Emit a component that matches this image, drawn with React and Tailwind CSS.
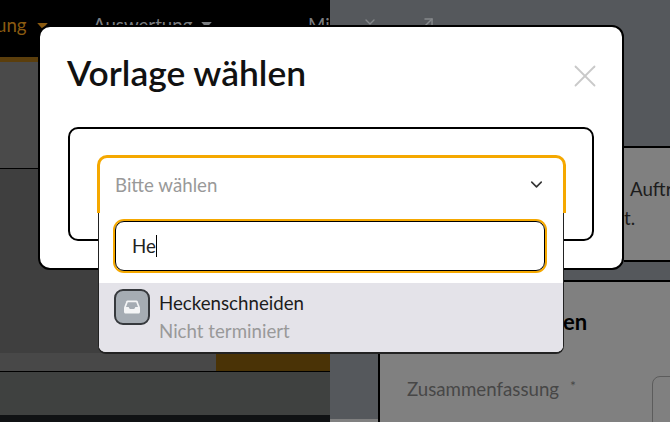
import React from 'react';
import { ChevronDown, X, ArrowUpRight } from 'lucide-react';

const lato = { fontFamily: 'Lato, sans-serif' };

function Caret({ className }) {
  return (
    <svg width="11" height="6" viewBox="0 0 14 8" className={className}>
      <path d="M0 0h14L7 8z" fill="currentColor" />
    </svg>
  );
}

function InboxIcon() {
  return (
    <svg width="16" height="14" viewBox="0 0 16 14" fill="none">
      <path d="M3.500.5h9c.5 0 .9.300 1.100.8L16 7.500v4.500c0 .9-.7 1.500-1.500 1.500h-13C.7 13.500 0 12.900 0 12V7.500l2.400-6.200C2.600.8 3 .5 3.500.5z" fill="#f4f5f6" />
      <path d="M3.800 2.200h8.400l1.800 4.800h-2.600l-1.200 2H5.800l-1.200-2H2z" fill="#a5acb3" />
    </svg>
  );
}

function Backdrop() {
  return (
    <div className="flex h-[422px] w-[670px] overflow-hidden">
      {/* left side of the page behind the dialog */}
      <div className="flex w-[330px] flex-col bg-[#484848]">
        <div className="flex h-[62px] items-start border-b-[5px] border-[#5b3e0c] bg-black pt-[11px] text-[18.7px]">
          <div className="-ml-[4px] flex w-[97px] items-center gap-[10px] text-[#8a5a10]">
            <span>ung</span>
            <Caret className="mt-[2px]" />
          </div>
          <div className="flex w-[215px] items-center gap-[9px] text-[#7a7d80]">
            <span>Auswertung</span>
            <Caret />
          </div>
          <span className="w-[22px] overflow-hidden text-[#7a7d80]">Mi</span>
        </div>
        <div className="h-[107px] border-b border-black bg-[#4a4a4a]" />
        <div className="flex-1 bg-[#3f3f3f]" />
        <div className="ml-[216px] h-[18px] bg-[#4a3306]" />
        <div className="h-[44px] border-t border-black bg-[#3f4140]" />
        <div className="h-[7px] bg-[#101214]" />
      </div>

      {/* right side of the page behind the dialog */}
      <div className="flex flex-1 flex-col bg-[#55585c] text-[#1c1c1c]">
        <div className="flex h-[146px] shrink-0 items-start gap-[42px] pt-[14px] pl-[32px] text-[#85888b]">
          <ChevronDown size={16} />
          <ArrowUpRight size={17} />
        </div>
        <div className="ml-[294px] h-[116px] shrink-0 border-y-2 border-black bg-[#808080] text-[18.7px]">
          <p className="pt-[27px] pl-[6px] whitespace-nowrap">Auftr</p>
          <p className="pt-[1px]">t.</p>
        </div>
        <div className="h-[18px] shrink-0" />
        <div className="flex min-h-0 flex-1 flex-col border-t-2 border-black">
          <div className="flex min-h-0 flex-1">
            <div className="flex w-[48px] flex-col">
              <div className="flex-1" />
              <div className="h-[3px] bg-[#808080]" />
            </div>
            <div className="flex-1 overflow-hidden border-l-2 border-black bg-[#808080]">
              <p className="pt-[23px] pl-[183px] text-[22px] font-bold text-black">en</p>
              <div className="flex items-start pt-[37px] pl-[27px]">
                <span className="text-[18.7px] text-[#474747]">Zusammenfassung</span>
                <span className="ml-[11px] text-[14px] text-[#474747]">*</span>
                <div className="mt-[1px] ml-[76px] h-[60px] w-[40px] shrink-0 rounded-l-lg border border-[#5c5c5c]" />
              </div>
            </div>
          </div>
        </div>
      </div>
    </div>
  );
}

export default function App() {
  return (
    <div className="relative h-[422px] w-[670px] overflow-hidden" style={lato}>
      <Backdrop />

      {/* dialog */}
      <div className="absolute top-[25px] left-[38px] h-[245px] w-[586px] rounded-[12px] border-2 border-black bg-white">
        <div className="flex items-start justify-between pt-[24px] pr-[18px] pl-[27px]">
          <h2 className="text-[35.4px] leading-[44px] font-semibold text-[#111]">Vorlage wählen</h2>
          <X size={38} strokeWidth={1.15} className="mt-[6px] text-[#c9c9c9]" />
        </div>
        <div className="mx-[28px] mt-[32px] h-[114px] rounded-[10px] border-2 border-black" />
      </div>

      {/* select with open menu */}
      <div className="absolute top-[155px] left-[97px] w-[469px]">
        <div className="flex h-[58px] items-start justify-between rounded-t-[10px] border-x-[3px] border-t-[3px] border-[#f5a800] bg-white pt-[15px] pr-[17px] pl-[15px]">
          <span className="text-[18.7px] leading-[24px] text-[#999]">Bitte wählen</span>
          <ChevronDown size={19} strokeWidth={2} className="mt-[2px] text-[#333]" />
        </div>
        <div className="mr-[2px] ml-[1px] overflow-hidden rounded-b-[8px] border-x border-b-2 border-[#222] bg-white">
          <div className="pt-[8px] pr-[18px] pb-[12px] pl-[16px]">
            <div className="flex h-[50px] items-center rounded-[9px] border-[1.5px] border-black pl-[16px] text-[18.7px] text-[#222] shadow-[0_0_0_2px_#f5a800]">
              He
              <span className="h-[22px] w-px bg-black" />
            </div>
          </div>
          <div className="flex h-[69px] gap-[9px] bg-[#e4e3e9] pt-[6px] pl-[15px]">
            <div className="flex h-[36px] w-[36px] items-center justify-center rounded-[9px] border-2 border-[#36393d] bg-[#a5acb3]">
              <InboxIcon />
            </div>
            <div className="text-[18.7px] leading-[28px]">
              <p className="text-[#1c1c1c]">Heckenschneiden</p>
              <p className="text-[#999]">Nicht terminiert</p>
            </div>
          </div>
        </div>
      </div>
    </div>
  );
}
